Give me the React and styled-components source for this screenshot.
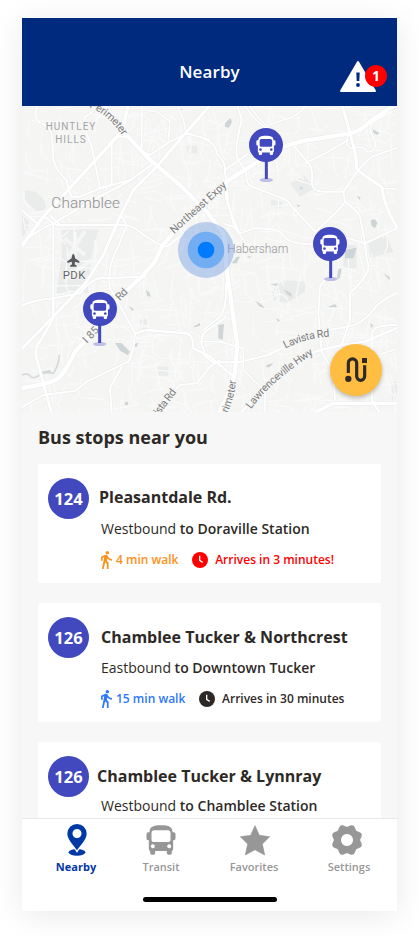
import React from "react";
import styled, { createGlobalStyle } from "styled-components";

const GlobalStyle = createGlobalStyle`
  * { box-sizing: border-box; }
  html, body { margin: 0; background: #fff; }
  body { font-family: "Open Sans", "Noto Sans", sans-serif; color: #2d2926; overflow: hidden; }
`;

const Page = styled.div`
  height: 937px;
  padding: 18px 22px 26px;
`;
const Phone = styled.main`
  width: 375px;
  height: 893px;
  display: flex;
  flex-direction: column;
  background: #f7f7f7;
  box-shadow: 0 4px 30px rgba(0, 0, 0, 0.09);
`;
const Header = styled.header`
  flex: 0 0 88px;
  display: grid;
  grid-template-columns: 57px 1fr 57px;
  align-items: start;
  padding-top: 41px;
  background: #002a7e;
  color: #fff;
`;
const HeaderTitle = styled.h1`
  grid-column: 2;
  margin: 0;
  text-align: center;
  font-size: 17px;
  font-weight: 550;
  line-height: 26px;
  letter-spacing: 0.1px;
`;
const AlertButton = styled.button`
  position: relative;
  width: 36px;
  height: 31px;
  margin-top: 2px;
  padding: 0;
  border: 0;
  background: none;
  svg { display: block; }
`;
const Badge = styled.span`
  position: absolute;
  left: 25px;
  top: 4px;
  width: 22px;
  height: 22px;
  border-radius: 50%;
  background: #f00;
  color: #fff;
  font: 700 14px/22px "Open Sans", sans-serif;
  text-align: center;
`;
const MapArea = styled.section`
  position: relative;
  flex: 0 0 306px;
  svg { display: block; }
`;
const RouteButton = styled.button`
  position: absolute;
  right: 15px;
  bottom: 16px;
  width: 52px;
  height: 52px;
  padding: 0;
  border: 0;
  border-radius: 50%;
  background: #ffbe41;
  box-shadow: 0 2px 4px rgba(0, 0, 0, 0.25);
`;
const Stops = styled.section`
  flex: 1 1 0;
  min-height: 0;
  overflow: hidden;
  padding: 13px 16px 0;
`;
const StopsTitle = styled.h2`
  margin: 0 0 14px;
  font-size: 18px;
  font-weight: 700;
  line-height: 25px;
`;
const Card = styled.article`
  display: grid;
  grid-template-columns: 41px 1fr;
  height: 119px;
  margin-bottom: 20px;
  padding: 14px 10px 0;
  border-radius: 2px;
  background: #fff;
  white-space: nowrap;
`;
const RouteNumber = styled.span`
  width: 41px;
  height: 41px;
  border-radius: 50%;
  background: #4248bd;
  color: #fff;
  font-size: 16.500px;
  font-weight: 700;
  line-height: 42px;
  text-align: center;
`;
const StopInfo = styled.div`
  display: flex;
  flex-direction: column;
  padding: ${(p) => p.$top}px 0 0 12px;
`;
const StopName = styled.h3`
  margin: 0 0 0 ${(p) => p.$shift}px;
  font-size: 16px;
  font-weight: 700;
  line-height: 22px;
`;
const Direction = styled.p`
  margin: ${(p) => p.$gap}px 0 0;
  font-size: 14px;
  font-weight: 400;
  line-height: 20px;
  b { font-weight: 600; }
`;
const Meta = styled.div`
  display: flex;
  align-items: center;
  height: 20px;
  margin-top: 11px;
  font-size: 12px;
  font-weight: 600;
  line-height: 18px;
`;
const Walk = styled.span`
  display: flex;
  align-items: center;
  gap: 4px;
  color: ${(p) => p.$color};
`;
const Arrival = styled.span`
  display: flex;
  align-items: center;
  gap: 7px;
  margin-left: 13.700px;
  color: ${(p) => p.$color};
`;
const TabBar = styled.nav`
  flex: 0 0 93px;
  display: flex;
  flex-direction: column;
  align-items: center;
  border-top: 1px solid #e8e8e8;
  background: #fff;
`;
const Tabs = styled.div`
  align-self: stretch;
  display: grid;
  grid-template-columns: 84px 86px 100px 90px;
  padding: 5px 0 0 12px;
  height: 78px;
`;
const Tab = styled.a`
  display: flex;
  flex-direction: column;
  align-items: center;
  color: ${(p) => (p.$active ? "#0039a6" : "#979797")};
  font-size: 11px;
  font-weight: ${(p) => (p.$active ? 700 : 600)};
  line-height: 16px;
  svg { display: block; margin: 0 0 3px ${(p) => p.$nudge || 0}px; }
`;
const HomeIndicator = styled.div`
  width: 134px;
  height: 5px;
  border-radius: 3px;
  background: #000;
`;

/* Icons */
const BUS =
  "M9 20C9 5 20 0 43.500 0C67 0 78 5 78 20V21H82Q87 21 87 26V39Q87 45 82 45H80V70Q80 76 76 77V83Q76 88 71 88H66Q61 88 61 83V77H26V83Q26 88 21 88H16Q11 88 11 83V77Q7 76 7 70V45H5Q0 45 0 39V26Q0 21 5 21H9ZM23 15Q15 15 15 23V43Q15 50 23 50H64Q72 50 72 43V23Q72 15 64 15ZM19 57a6 6 0 1 0 .01 0ZM68 57a6 6 0 1 0 .01 0Z";

const BusIcon = () => (
  <svg width="30" height="32" viewBox="-1.500 -4 90 96"><path d={BUS} fill="currentColor" fillRule="evenodd" /></svg>
);
const NearbyIcon = () => (
  <svg width="20" height="32" viewBox="0 0 60 96">
    <ellipse cx="30" cy="85" rx="25" ry="10" fill="currentColor" />
    <path d="M30 79C22 66 1 47 1 29A29 29 0 0 1 59 29C59 47 38 66 30 79Z" fill="#fff" stroke="#fff" strokeWidth="8" />
    <path fillRule="evenodd" d="M30 79C22 66 1 47 1 29A29 29 0 0 1 59 29C59 47 38 66 30 79ZM30 15a13.500 13.500 0 1 0 .01 0Z" fill="currentColor" />
  </svg>
);
const StarIcon = () => (
  <svg width="32" height="32" viewBox="-3 -4 96 96">
    <path d="M45 1L58 30L89 34L67 56L74 89L45 73L16 89L23 56L1 34L32 30Z" fill="currentColor" stroke="currentColor" strokeWidth="2" strokeLinejoin="round" />
  </svg>
);
const gearOutline = Array.from({ length: 96 }, (_, i) => {
  const a = (i / 96) * Math.PI * 2;
  const r = 43.500 - 3.800 * Math.cos(a * 8);
  return `${i ? "L" : "M"}${(48 + r * Math.cos(a)).toFixed(1)} ${(48 + r * Math.sin(a)).toFixed(1)}`;
}).join("");
const GearIcon = () => (
  <svg width="32" height="32" viewBox="0 0 96 96">
    <path d={`${gearOutline}ZM48 30a18 18 0 1 0 .01 0Z`} fill="currentColor" fillRule="evenodd" />
  </svg>
);
const WalkIcon = () => (
  <svg width="11" height="18" viewBox="6 1.500 13 21.500">
    <path fill="currentColor" d="M13.500 5.500c1.100 0 2-.9 2-2s-.9-2-2-2-2 .9-2 2 .9 2 2 2zM9.800 8.900L7 23h2.100l1.800-8 2.100 2v6h2v-7.500l-2.100-2 .6-3C14.800 12 16.800 13 19 13v-2c-1.900 0-3.500-1-4.300-2.400l-1-1.600c-.4-.6-1-1-1.700-1-.3 0-.5.1-.8.1L6 8.300V13h2V9.600l1.800-.7" />
  </svg>
);
const ClockIcon = () => (
  <svg width="16" height="16" viewBox="0 0 24 24">
    <circle cx="12" cy="12" r="12" fill="currentColor" />
    <path d="M11.500 5.500V12.500L16 15.500" fill="none" stroke="#fff" strokeWidth="2" />
  </svg>
);
const AlertIcon = () => (
  <svg width="36" height="31" viewBox="0 0 36 31">
    <path d="M18 1L35 30H1Z" fill="#fff" stroke="#fff" strokeWidth="2" strokeLinejoin="round" />
    <path d="M16.300 11.500H19.700L19.300 20H16.700Z" fill="#002a7e" />
    <circle cx="18" cy="24" r="1.900" fill="#002a7e" />
  </svg>
);
const RouteIcon = () => (
  <svg width="52" height="52" viewBox="375 267 156 156">
    <path d="M430 354V324a12.500 12.500 0 0 1 25 0V364a12 12 0 0 0 24 0V331" fill="none" stroke="#2d2926" strokeWidth="9.500" />
    <path d="M471 309h15v15h-15z" fill="#2d2926" />
    <circle cx="430" cy="371.500" r="9.500" fill="#2d2926" />
  </svg>
);

/* Map geometry, three units to a pixel */
const ROADS = [
  [13, "M250 10L310 95L385 175L480 255L560 335L610 400Q620 440 618 495L635 615L652 735L645 815Q635 870 595 940"],
  [13, "M1140 5L1055 60Q1020 97 990 100L880 118Q800 130 765 155L705 190L620 245L500 350L425 440L405 485L370 525L290 600L230 685L165 755Q140 810 115 835Q90 853 0 865"],
  [10, "M325 10L310 85L300 100L140 275L70 350L0 445"],
  [9, "M575 10L500 95L410 200L340 270L300 350L250 465L200 545L85 665L0 752"],
  [6, "M0 435Q50 390 100 370L200 310L325 245L400 190"],
  [6, "M55 10Q35 55 60 68Q98 80 97 125L100 180Q110 215 140 240Q145 270 155 290L180 290L240 265L330 240"],
  [6, "M225 10Q230 35 195 50Q185 70 215 140Q228 200 240 265"],
  [6, "M240 265L275 255V130Q275 110 300 110H330"],
  [6, "M365 10V155L390 165Q420 145 450 125L500 100L570 120"],
  [5, "M365 30L410 35L450 63L445 125M470 10L490 60L498 100L530 65L555 35"],
  [6, "M0 325L50 370M70 350L110 375H315Q340 378 365 400L410 430L440 440L480 410M90 345L125 380M100 370V600"],
  [6, "M300 340L320 375L295 440Q260 500 270 565Q290 600 310 635L345 700Q340 760 325 785L200 845L165 873L70 885L0 925"],
  [6, "M0 620Q40 600 100 595L180 580Q210 540 240 535L380 530"],
  [8, "M100 590V655L60 725Q42 740 50 775L70 850L95 940"],
  [7, "M345 700L380 690L500 700Q520 705 520 745L570 770L635 825"],
  [6, "M305 800L270 865L275 940M600 780L570 800L530 850L480 855L430 905L395 940"],
  [6, "M620 650L570 685Q540 700 545 735L555 760"],
  [6, "M540 110Q590 130 590 160Q620 190 615 215Q620 250 625 310L640 370L655 400"],
  [5, "M670 10Q700 60 740 85L755 110M685 10Q710 55 755 90M865 10Q830 50 805 55L745 75"],
  [6, "M650 10L665 60Q640 155 655 180L680 220Q675 250 695 260L775 290Q810 300 815 320L885 395Q960 330 975 305L970 275L1015 210L1055 170L1140 140"],
  [6, "M620 250Q610 290 630 330L660 405L670 420M615 210L685 160"],
  [9, "M965 10L990 100Q1010 165 1010 205Q1020 220 1085 260Q1090 300 1110 345L1135 390"],
  [6, "M815 130L870 195Q880 215 875 250Q880 275 910 275L970 275M855 190L915 160L985 120"],
  [6, "M975 305Q1010 330 1020 350L1035 430Q1038 475 1045 495Q1050 525 990 580V660L965 735M1140 380L1035 430L970 410"],
  [5, "M985 105Q970 135 995 145Q1035 135 1040 155Q1070 155 1065 125L1050 90Q1040 65 1140 25M1085 265L1140 268"],
  [6, "M610 370L640 380L660 400L700 385Q770 385 785 400Q800 430 860 432L940 425L970 410"],
  [6, "M550 690L600 650Q620 630 618 550M550 765L580 787H655L745 765L795 740L925 690L985 680Q1030 670 1060 630Q1080 600 1140 575"],
  [7, "M660 940L750 845Q820 780 885 755L965 735L1035 725L1140 680"],
  [5, "M540 725H600L670 745V810L735 875V940"],
  [6, "M920 530L900 560L895 640L905 755L940 815L945 900M1140 675Q1080 675 1065 685Q1055 695 1055 720V900L1080 940"],
  [10, "M880 940L940 910H1140"],
  [5, "M1080 762L1140 745"],
];

/* Small residential streets, laid out from a fixed seed */
const minorStreets = (() => {
  let seed = 73;
  const rnd = () => ((seed = (seed * 16807) % 2147483647) / 2147483647);
  const parts = [];
  for (let i = 0; i < 620; i++) {
    const x = rnd() * 1125;
    const y = 18 + rnd() * 918;
    const base = rnd() > 0.5 ? 0 : Math.PI / 2;
    const a = base + (rnd() - 0.5) * 0.6;
    const l = 25 + rnd() * 50;
    const b = a + (rnd() - 0.5) * 1.8;
    parts.push(`M${x.toFixed(0)} ${y.toFixed(0)}l${(Math.cos(a) * l).toFixed(0)} ${(Math.sin(a) * l).toFixed(0)}l${(Math.cos(b) * 24).toFixed(0)} ${(Math.sin(b) * 24).toFixed(0)}`);
  }
  return parts.join("");
})();

const PARKS =
  "M125 390L235 388L215 465L205 580H110L125 465ZM15 270L45 275Q85 300 75 330L50 335L15 300ZM6 345L28 365L20 400L6 410ZM500 138H532V160H500ZM810 250L855 227L885 265L840 290ZM752 300L790 305L780 325L755 325ZM1045 420L1100 408L1120 455L1050 475ZM755 575L790 540L855 545L855 575L800 610L760 600ZM412 800H445V828H412ZM970 435H1010V505H970ZM1115 845H1135V905H1115ZM360 660L385 655L380 690L360 685Z";
const WATER =
  "M615 70L630 55Q643 65 625 83L615 80ZM475 28L487 28L480 37ZM1058 88L1078 98L1072 105L1060 98ZM1052 362Q1065 350 1072 370L1065 385L1055 378ZM1010 288L1022 292L1018 300ZM828 313L842 317L835 321ZM838 264L848 260L845 270ZM975 450L1010 443L1000 475H975ZM285 728L305 730L330 755L323 765L300 752ZM340 735L355 727L350 742ZM377 570L388 577L392 590L382 588ZM325 617L342 627L337 633ZM520 680L540 668L540 677L525 682ZM595 675L612 672L608 720L595 715ZM705 603L720 610L735 625L720 620ZM792 568L815 580L815 592L800 582ZM925 620L945 612L952 622H930ZM955 507L965 505L960 535L950 537ZM1090 520L1110 532L1108 540ZM740 795L760 788L750 802H738ZM768 655L780 660L775 667ZM750 553L775 550L770 558ZM315 906h9v9h-9ZM1050 670L1060 675L1055 685ZM635 490L650 470L660 470L650 490ZM680 470L692 467L690 475ZM65 815L90 810L95 818L70 822Z";

const MAP_PATHS = [
  ["perimeterTop", "M207 22Q267 43 310 112"],
  ["northeast", "M462 402L624 256"],
  ["lavista", "M796 746Q860 713 930 710"],
  ["lawrenceville", "M693 928Q752 844 886 758"],
  ["i85", "M201 731L243 687"],
  ["rd", "M299 603L327 575"],
  ["vista", "M408 958L473 873"],
  ["perimeterLow", "M608 973Q645 900 648 838"],
];
const MAP_LABELS = [
  ["perimeterTop", "Perimeter", 134],
  ["northeast", "Northeast Expy", 214],
  ["lavista", "Lavista Rd", 138],
  ["lawrenceville", "Lawrenceville Hwy", 252],
  ["i85", "I 85", 54],
  ["rd", "Rd", 36],
  ["vista", "vista Rd", 102],
  ["perimeterLow", "Perimeter", 138],
];
const PINS = [
  { x: 738, y: 135, bx: 739 },
  { x: 930, y: 432, bx: 932 },
  { x: 240, y: 627, bx: 239 },
];

const BusPin = ({ x, y, bx }) => (
  <g>
    <ellipse cx={bx} cy={y + 105} rx="20" ry="6" fill="#bdbfe6" />
    <path d={`M${bx} ${y}V${y + 102}`} stroke="#4248bd" strokeWidth="9" />
    <circle cx={x} cy={y} r="51" fill="#4248bd" />
    <path transform={`translate(${x - 29} ${y - 28}) scale(.66)`} d={BUS} fill="#fff" fillRule="evenodd" />
  </g>
);

const MapLabel = styled.text`
  font-family: Roboto, "Open Sans", sans-serif;
  font-size: ${(p) => p.$size || 32}px;
  fill: ${(p) => p.$fill || "#7d7e80"};
  letter-spacing: ${(p) => p.$tracking || 0}px;
  text-anchor: ${(p) => (p.$center ? "middle" : "start")};
  font-weight: ${(p) => p.$weight || 400};
  paint-order: stroke;
  stroke: #f6f6f5;
  stroke-width: 4px;
`;

const StreetMap = () => (
  <svg width="375" height="306" viewBox="6 18 1125 918">
    <defs>{MAP_PATHS.map(([id, d]) => <path key={id} id={id} d={d} />)}</defs>
    <path d="M0 0H1140V940H0Z" fill="#f5f5f4" />
    <path d={PARKS} fill="#eaecec" />
    <path d="M133 415L195 465M195 393L145 470M165 395V470M130 540L215 480" stroke="#f5f5f5" strokeWidth="12" fill="none" />
    <path d={minorStreets} fill="none" stroke="#fafafa" strokeWidth="3.500" />
    <path d={WATER} fill="#ced5d6" />
    <path d="M6 825Q25 818 30 828T55 828Q65 812 100 820Q115 800 118 765" fill="none" stroke="#d3d9da" strokeWidth="5" />
    <g fill="none" strokeLinejoin="round">
      {ROADS.map(([w, d], i) => <path key={i} d={d} stroke="#e9ebeb" strokeWidth={w + 3} />)}
      {ROADS.map(([w, d], i) => <path key={i} d={d} stroke="#fff" strokeWidth={w} />)}
    </g>
    <MapLabel x="153" y="91" $center $size={30} $tracking={3} $fill="#a4a5a6">HUNTLEY</MapLabel>
    <MapLabel x="153" y="129" $center $size={30} $tracking={3} $fill="#a4a5a6">HILLS</MapLabel>
    <MapLabel x="94" y="324" $size={46} $fill="#8e9091" textLength="206" $weight={350}>Chamblee</MapLabel>
    <MapLabel x="622" y="458" $size={36} $fill="#989a9b" textLength="183" $weight={350}>Habersham</MapLabel>
    <MapLabel x="128" y="538" $size={34} $fill="#646566" textLength="68">PDK</MapLabel>
    {MAP_LABELS.map(([id, text, length]) => (
      <MapLabel key={id}><textPath href={`#${id}`} textLength={length}>{text}</textPath></MapLabel>
    ))}
    <path d="M160 461Q165 464 165 475L178 484V489L165 485L164 493L170 497V500H150V497L156 493L155 485L142 489V484L155 475Q155 464 160 461Z" fill="#595a5b" />
    <circle cx="558" cy="450" r="84" fill="#4a84db" fillOpacity=".34" />
    <circle cx="558" cy="450" r="55" fill="#4699f5" fillOpacity=".62" />
    <circle cx="558" cy="450" r="25" fill="#007aff" />
    {PINS.map((p) => <BusPin key={p.x} {...p} />)}
  </svg>
);

const STOPS = [
  { number: 124, name: "Pleasantdale Rd.", shift: -2, top: 8, gap: 11, heading: "Westbound", to: "to Doraville Station", walk: "4 min walk", walkColor: "#ff9017", arrival: "Arrives in 3 minutes!", arrivalColor: "#ff0000" },
  { number: 126, name: "Chamblee Tucker & Northcrest", shift: 0, top: 9, gap: 10, heading: "Eastbound", to: "to Downtown Tucker", walk: "15 min walk", walkColor: "#2d78ff", arrival: "Arrives in 30 minutes", arrivalColor: "#2d2926" },
  { number: 126, name: "Chamblee Tucker & Lynnray", shift: -4, top: 9, gap: 9, heading: "Westbound", to: "to Chamblee Station" },
];
const TABS = [
  { label: "Nearby", Icon: NearbyIcon, active: true, nudge: 1 },
  { label: "Transit", Icon: BusIcon },
  { label: "Favorites", Icon: StarIcon, nudge: 2 },
  { label: "Settings", Icon: GearIcon, nudge: -4 },
];

export default function App() {
  return (
    <Page>
      <GlobalStyle />
      <Phone>
        <Header>
          <HeaderTitle>Nearby</HeaderTitle>
          <AlertButton aria-label="Alerts"><AlertIcon /><Badge>1</Badge></AlertButton>
        </Header>
        <MapArea>
          <StreetMap />
          <RouteButton aria-label="Plan a route"><RouteIcon /></RouteButton>
        </MapArea>
        <Stops>
          <StopsTitle>Bus stops near you</StopsTitle>
          {STOPS.map((s) => (
            <Card key={s.name}>
              <RouteNumber>{s.number}</RouteNumber>
              <StopInfo $top={s.top}>
                <StopName $shift={s.shift}>{s.name}</StopName>
                <Direction $gap={s.gap}>{s.heading} <b>{s.to}</b></Direction>
                {s.walk && (
                  <Meta>
                    <Walk $color={s.walkColor}><WalkIcon />{s.walk}</Walk>
                    <Arrival $color={s.arrivalColor}><ClockIcon />{s.arrival}</Arrival>
                  </Meta>
                )}
              </StopInfo>
            </Card>
          ))}
        </Stops>
        <TabBar>
          <Tabs>
            {TABS.map(({ label, Icon, active, nudge }) => (
              <Tab key={label} $active={active} $nudge={nudge}><Icon />{label}</Tab>
            ))}
          </Tabs>
          <HomeIndicator />
        </TabBar>
      </Phone>
    </Page>
  );
}
